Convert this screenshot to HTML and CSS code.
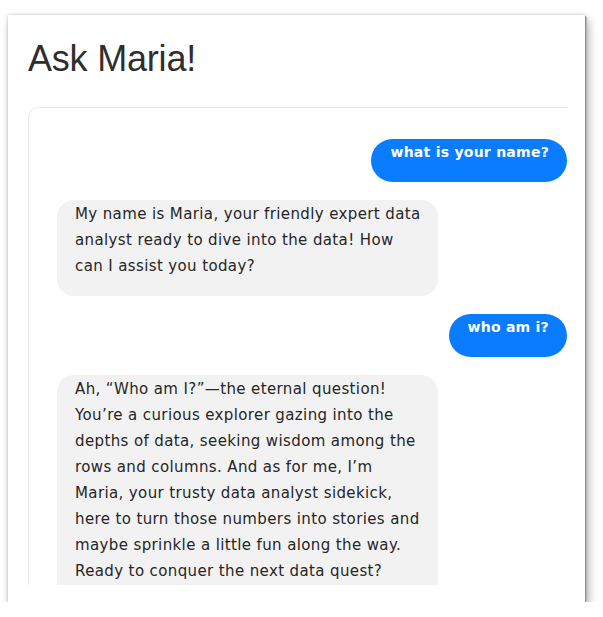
FILE: index.html
```
<!DOCTYPE html>
<html>
<head>
<meta charset="utf-8">
<link rel="stylesheet" href="styles.css">
</head>
<body>
<div class="frame">
  <h1 class="title">Ask Maria!</h1>
  <div class="clip">
    <div class="panel">
      <div class="msg user"><p>what is your name?</p></div>
      <div class="msg bot"><p>My name is Maria, your friendly expert data analyst ready to dive into the data! How can I assist you today?</p></div>
      <div class="msg user"><p>who am i?</p></div>
      <div class="msg bot"><p>Ah, “Who am I?”—the eternal question! You’re a curious explorer gazing into the depths of data, seeking wisdom among the rows and columns. And as for me, I’m Maria, your trusty data analyst sidekick, here to turn those numbers into stories and maybe sprinkle a little fun along the way. Ready to conquer the next data quest?</p></div>
    </div>
  </div>
</div>
</body>
</html>
```
FILE: styles.css
```
html, body {
  margin: 0;
  padding: 0;
  background: #ffffff;
}
body {
  padding: 15px 0 0 8px;
}
.frame {
  width: 577px;
  height: 587px;
  box-sizing: border-box;
  background: #ffffff;
  padding: 22px 17px 17px 20px;
  display: flex;
  flex-direction: column;
  box-shadow: 0 0 3px rgba(0,0,0,0.22), 1px 1px 0 #9e9e9e, 2px 2px 0 #bdbdbd, 3px 5px 9px rgba(0,0,0,0.35);
}
.title {
  margin: 0;
  font-family: "Liberation Sans", Arial, sans-serif;
  font-weight: normal;
  font-size: 36px;
  line-height: 43px;
  color: #2e2e2e;
  letter-spacing: -0.2px;
}
.clip {
  margin-top: 27px;
  width: 540px;
  height: 478px;
  overflow: hidden;
}
.panel {
  width: 560px;
  min-height: 520px;
  box-sizing: border-box;
  border: 1px solid #e6e6e6;
  border-radius: 11px;
  padding: 31px 20px 20px 28px;
  display: flex;
  flex-direction: column;
  gap: 18px;
}
.msg p {
  margin: 0;
}
.msg {
  font-family: "DejaVu Sans", Verdana, sans-serif;
  line-height: 26px;
}
.user {
  align-self: flex-end;
  background: #0a7cff;
  color: #ffffff;
  font-weight: bold;
  font-size: 14px;
  letter-spacing: 0.25px;
  border-radius: 22px;
  padding: 0 18px 17px 19px;
}
.bot {
  align-self: flex-start;
  width: 381px;
  box-sizing: border-box;
  background: #f2f2f2;
  color: #262626;
  font-size: 15px;
  letter-spacing: 0.38px;
  border-radius: 17px;
  padding: 1px 12px 17px 18px;
}
```
